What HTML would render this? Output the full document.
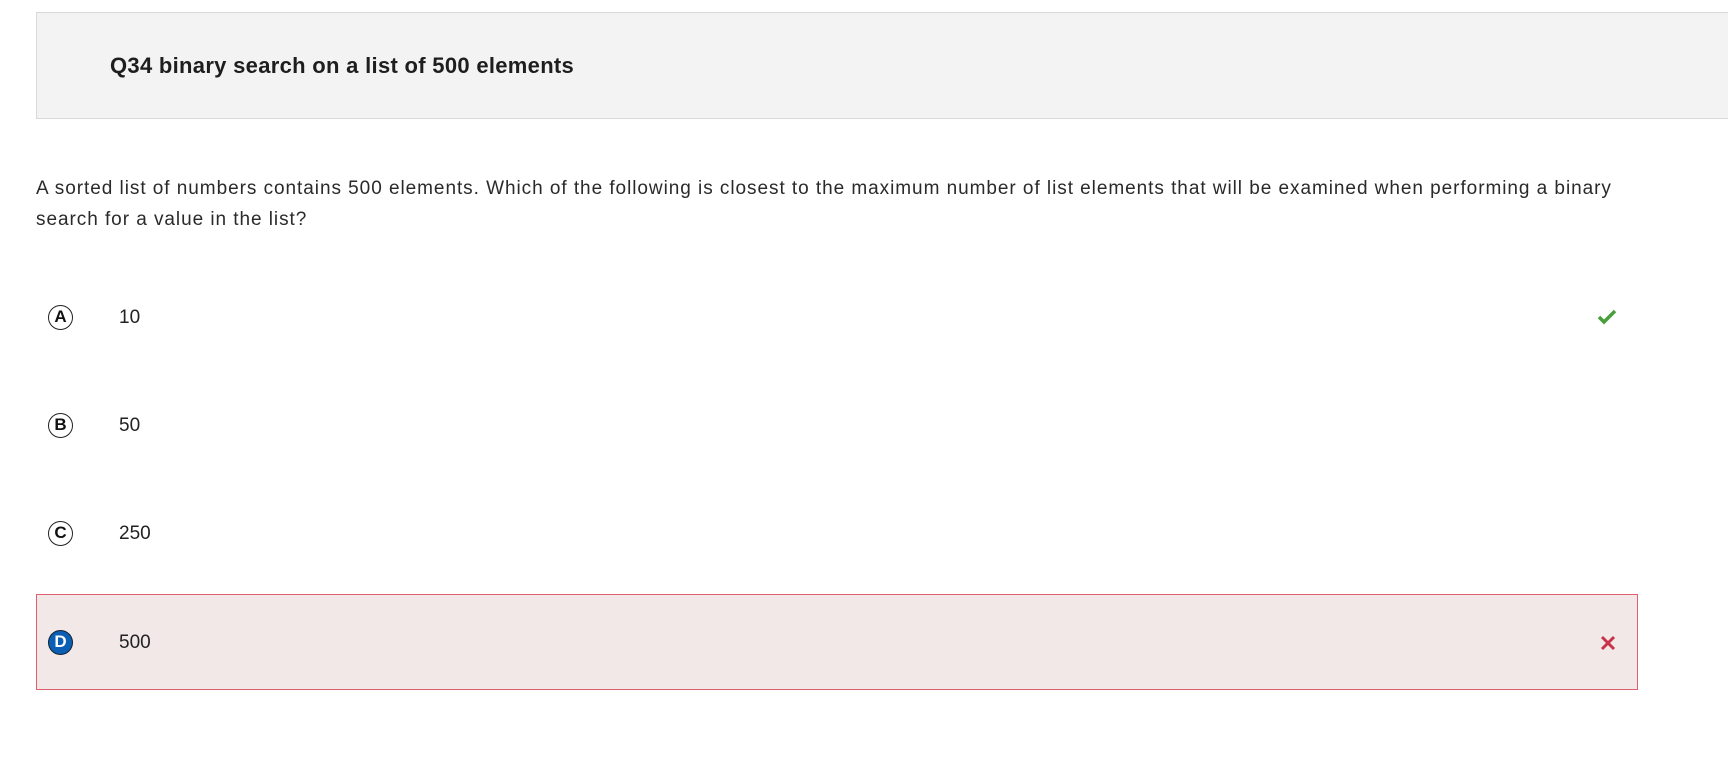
<!DOCTYPE html>
<html><head><meta charset="utf-8"><style>
*{margin:0;padding:0;box-sizing:border-box}
body{width:1728px;height:769px;background:#fff;font-family:"Liberation Sans",Arial,sans-serif;color:#222;position:relative;overflow:hidden}
.hdr{position:absolute;left:36px;top:12px;width:1720px;height:107px;background:#f3f3f3;border:1px solid #d9d9d9}
.hdr h1{position:absolute;left:73px;top:40px;font-size:22px;font-weight:bold;color:#1e1e1e;letter-spacing:0.3px}
.q{position:absolute;left:36px;top:173px;width:1660px;font-size:19px;line-height:31px;color:#2a2a2a;letter-spacing:0.95px}
.opt{position:absolute;left:36px;width:1602px;height:96px}
.circ{position:absolute;left:12px;width:25px;height:25px;border:1.5px solid #222;border-radius:50%;font-weight:bold;font-size:17px;text-align:center;line-height:22px;color:#111}
.val{position:absolute;left:83px;font-size:19px;color:#222}
.bad{background:#f2e8e8;border:1px solid #e06070}
</style></head><body>
<div class="hdr"><h1>Q34 binary search on a list of 500 elements</h1></div>
<div class="q">A sorted list of numbers contains 500 elements. Which of the following is closest to the maximum number of list elements that will be examined when performing a binary<br>search for a value in the list?</div>

<div class="opt" style="top:270px"><div class="circ" style="top:35px">A</div><div class="val" style="top:37px">10</div>
<svg style="position:absolute;left:1561px;top:39px" width="20" height="16" viewBox="0 0 20 16"><path d="M2 8 L7 13 L18 2" stroke="#4a9f3c" stroke-width="3.5" fill="none"/></svg></div>
<div class="opt" style="top:378px"><div class="circ" style="top:35px">B</div><div class="val" style="top:37px">50</div></div>
<div class="opt" style="top:486px"><div class="circ" style="top:35px">C</div><div class="val" style="top:37px">250</div></div>
<div class="opt bad" style="top:594px;height:96px"><div class="circ" style="top:35px;left:11px;background:#0a5fb4;color:#fff;border-color:#123">D</div><div class="val" style="top:37px;left:82px">500</div>
<svg style="position:absolute;left:1563px;top:40px" width="16" height="16" viewBox="0 0 16 16"><path d="M2 2 L14 14 M14 2 L2 14" stroke="#c8334a" stroke-width="3" fill="none"/></svg></div>
</body></html>
